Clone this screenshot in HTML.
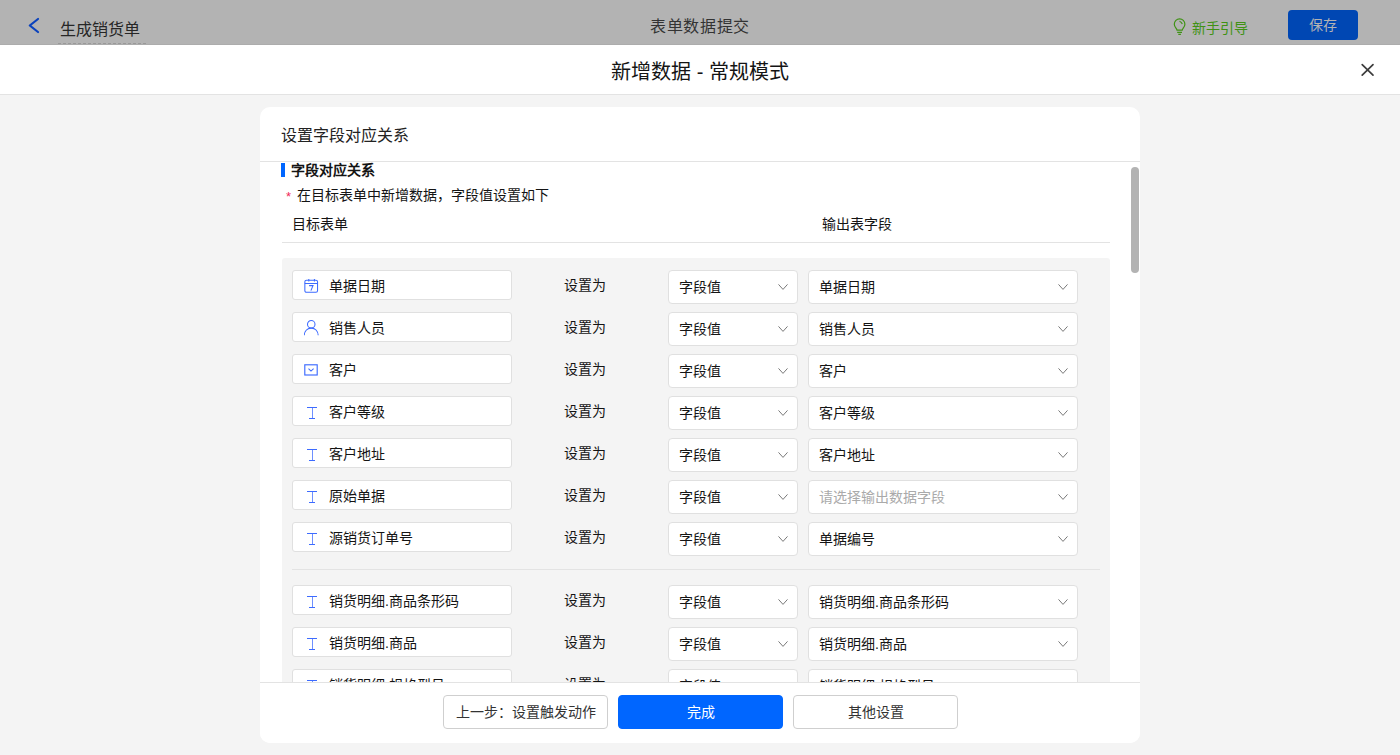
<!DOCTYPE html>
<html lang="zh-CN"><head><meta charset="utf-8">
<style>
*{box-sizing:border-box;margin:0;padding:0}
html,body{width:1400px;height:755px;overflow:hidden;background:#f4f4f4;font-family:"Liberation Sans",sans-serif;color:#333;font-size:14px}
.topbar{position:absolute;left:0;top:0;width:1400px;height:45px;background:#b3b3b3;border-bottom:1px solid #acacac}
.back{position:absolute;left:0;top:0;width:60px;height:45px}
.apptitle{position:absolute;left:60px;top:19px;font-size:16px;line-height:22px;color:#262626}
.apptitle:after{content:"";position:absolute;left:-2px;right:-6px;bottom:-3px;border-bottom:1px dashed #999}
.centertitle{position:absolute;left:0;width:1400px;top:16px;letter-spacing:0.6px;text-align:center;font-size:16px;line-height:22px;color:#333}
.guide{position:absolute;left:1174px;top:17px;color:#3f9214;font-size:14px;line-height:20px}
.guide span{position:absolute;left:18px;top:1px;white-space:nowrap}
.save{position:absolute;left:1288px;top:10px;width:70px;height:30px;background:#0047b3;border-radius:4px;color:#b3b3b3;text-align:center;line-height:30px;font-size:14px}
.mhead{position:absolute;left:0;top:45px;width:1400px;height:50px;background:#fff;border-bottom:1px solid #e3e3e3}
.mtitle{position:absolute;left:0;width:1400px;top:14px;text-align:center;font-size:20px;line-height:26px;color:#141414}
.close{position:absolute;left:1355px;top:58px;width:25px;height:25px}
.card{position:absolute;left:260px;top:107px;width:880px;height:636px;background:#fff;border-radius:10px;overflow:hidden}
.chead{position:absolute;left:0;top:0;width:880px;height:55px;border-bottom:1px solid #e3e3e3}
.chead .t{position:absolute;left:21px;top:18px;font-size:16px;line-height:22px;color:#222}
.scroll{position:absolute;left:0;top:55px;width:880px;height:520px;overflow:hidden}
.sbar{position:absolute;left:871px;top:60px;width:8px;height:106px;background:#b3b3b3;border-radius:4px}
.footer{position:absolute;left:0;top:575px;width:880px;height:61px;border-top:1px solid #e3e3e3;background:#fff}
.btn{position:absolute;top:12px;width:165px;height:34px;border:1px solid #cfcfcf;border-radius:4px;text-align:center;line-height:32px;font-size:14px;color:#333;background:#fff}
.btn.primary{background:#0066ff;border-color:#0066ff;color:#fff}

.clip{position:absolute;left:260px;top:162px;width:870px;height:520px;overflow:hidden}
.inner{position:absolute;left:-260px;top:-162px;width:1400px;height:800px}
.secbar{position:absolute;left:281px;top:163px;width:4px;height:14px;background:#0066ff}
.sectitle{position:absolute;left:291px;top:160px;font-size:14px;line-height:20px;font-weight:bold;color:#141414}
.req{position:absolute;left:286px;top:189px;font-size:13px;line-height:16px;color:#f0285a}
.note{position:absolute;left:297px;top:185px;font-size:14px;line-height:20px;color:#141414}
.colh{position:absolute;top:214px;font-size:14px;line-height:20px;color:#141414}
.hline{position:absolute;left:282px;top:242px;width:828px;height:1px;background:#e3e3e3}
.gray{position:absolute;left:282px;top:258px;width:828px;height:600px;background:#f4f4f4;border-radius:3px}
.sep{position:absolute;left:292px;top:569px;width:808px;height:1px;background:#e3e3e3}
.row{position:absolute;left:0;width:1400px;height:34px}
.inp{position:absolute;left:292px;top:0;width:220px;height:30px;background:#fff;border:1px solid #e0e0e0;border-radius:3px}
.inp .ic{position:absolute;left:11px;top:6px}
.inp span{position:absolute;left:36px;top:5px;line-height:20px;font-size:14px;color:#141414;white-space:nowrap}
.setto{position:absolute;left:564px;top:5px;line-height:20px;font-size:14px;color:#141414}
.sel{position:absolute;top:0;height:34px;background:#fff;border:1px solid #e0e0e0;border-radius:4px}
.sel.s1{left:668px;width:130px}
.sel.s2{left:808px;width:270px}
.sel span{position:absolute;left:10px;top:6px;line-height:20px;font-size:14px;color:#141414;white-space:nowrap}
.sel span.ph{color:#aaa}
.sel .chev{position:absolute;right:8px;top:12px}
</style></head><body>
<div class="topbar">
  <svg class="back" viewBox="0 0 60 45"><path d="M38 19 L29.8 25.5 L38 32" fill="none" stroke="#0a42bd" stroke-width="2.2" stroke-linecap="round" stroke-linejoin="round"/></svg>
  <div class="apptitle">生成销货单</div>
  <div class="centertitle">表单数据提交</div>
  <div class="guide"><svg width="16" height="20" viewBox="1172 17 16 20" style="position:absolute;left:-2px;top:0px"><path d="M1177 30.2 C1177 28.6 1174.3 27.2 1174.3 24.2 C1174.3 21 1176.8 18.9 1179.6 18.9 C1182.4 18.9 1184.9 21 1184.9 24.2 C1184.9 27.2 1182.2 28.6 1182.2 30.2 Z" fill="none" stroke="#3f9214" stroke-width="1.2" stroke-linejoin="round"/><path d="M1177.2 32.3 H1182 M1178.3 34.3 H1180.9" stroke="#3f9214" stroke-width="1.2"/><path d="M1179.5 21.2 C1180.8 21.6 1181.8 22.6 1182.3 24" fill="none" stroke="#3f9214" stroke-width="1.1"/></svg><span>新手引导</span></div>
  <div class="save">保存</div>
</div>
<div class="mhead"><div class="mtitle">新增数据 - 常规模式</div></div>
<svg class="close" viewBox="1355 58 25 25"><path d="M1362.2 64.6 L1373 75.2 M1373 64.6 L1362.2 75.2" stroke="#3d3d3d" stroke-width="1.7" stroke-linecap="round"/></svg>
<div class="card">
  <div class="chead"><div class="t">设置字段对应关系</div></div>
  
  <div class="sbar"></div>
  <div class="footer">
    <div class="btn" style="left:183px">上一步：设置触发动作</div>
    <div class="btn primary" style="left:358px">完成</div>
    <div class="btn" style="left:533px">其他设置</div>
  </div>
</div>
<div class="clip"><div class="inner">
<div class="secbar"></div><div class="sectitle">字段对应关系</div>
<div class="req">*</div><div class="note">在目标表单中新增数据，字段值设置如下</div>
<div class="colh" style="left:292px">目标表单</div><div class="colh" style="left:822px">输出表字段</div>
<div class="hline"></div>
<div class="gray"></div>
<div class="sep"></div>
<div class="row" style="top:270px">
 <div class="inp"><svg class="ic" width="16" height="18" viewBox="0 0 16 18"><rect x="0.85" y="3.2" width="12.7" height="12.1" rx="1.6" fill="none" stroke="#3d6bff" stroke-width="1.05"/><path d="M0.85 6.5 H13.55 M4.8 1.9 V4.6 M10.4 1.9 V4.6" stroke="#3d6bff" stroke-width="1.05"/><path d="M5.1 8.6 H9 L6.9 13.6" fill="none" stroke="#3d6bff" stroke-width="1.05"/></svg><span>单据日期</span></div>
 <div class="setto">设置为</div>
 <div class="sel s1"><span>字段值</span><svg class="chev" width="12" height="8" viewBox="0 0 12 8"><path d="M1.5 1.4 L6 6.4 L10.5 1.4" fill="none" stroke="#7a7a7a" stroke-width="1"/></svg></div>
 <div class="sel s2"><span>单据日期</span><svg class="chev" width="12" height="8" viewBox="0 0 12 8"><path d="M1.5 1.4 L6 6.4 L10.5 1.4" fill="none" stroke="#7a7a7a" stroke-width="1"/></svg></div>
</div>
<div class="row" style="top:312px">
 <div class="inp"><svg class="ic" width="16" height="18" viewBox="0 0 16 18"><circle cx="7.25" cy="5.3" r="3.75" fill="none" stroke="#3d6bff" stroke-width="1.05"/><path d="M0.3 16.3 C0.5 12 3.4 9.1 7.25 9.1 C11.1 9.1 14 12 14.2 16.3" fill="none" stroke="#3d6bff" stroke-width="1.05"/></svg><span>销售人员</span></div>
 <div class="setto">设置为</div>
 <div class="sel s1"><span>字段值</span><svg class="chev" width="12" height="8" viewBox="0 0 12 8"><path d="M1.5 1.4 L6 6.4 L10.5 1.4" fill="none" stroke="#7a7a7a" stroke-width="1"/></svg></div>
 <div class="sel s2"><span>销售人员</span><svg class="chev" width="12" height="8" viewBox="0 0 12 8"><path d="M1.5 1.4 L6 6.4 L10.5 1.4" fill="none" stroke="#7a7a7a" stroke-width="1"/></svg></div>
</div>
<div class="row" style="top:354px">
 <div class="inp"><svg class="ic" width="16" height="18" viewBox="0 0 16 18"><rect x="0.8" y="3.8" width="12.4" height="10.2" fill="none" stroke="#3d6bff" stroke-width="1.15"/><path d="M4.5 7.7 L7 10.1 L9.6 7.7" fill="none" stroke="#3d6bff" stroke-width="1.05"/></svg><span>客户</span></div>
 <div class="setto">设置为</div>
 <div class="sel s1"><span>字段值</span><svg class="chev" width="12" height="8" viewBox="0 0 12 8"><path d="M1.5 1.4 L6 6.4 L10.5 1.4" fill="none" stroke="#7a7a7a" stroke-width="1"/></svg></div>
 <div class="sel s2"><span>客户</span><svg class="chev" width="12" height="8" viewBox="0 0 12 8"><path d="M1.5 1.4 L6 6.4 L10.5 1.4" fill="none" stroke="#7a7a7a" stroke-width="1"/></svg></div>
</div>
<div class="row" style="top:396px">
 <div class="inp"><svg class="ic" width="16" height="18" viewBox="0 0 16 18"><path d="M3 4.5 H13 M5 15.5 H11" fill="none" stroke="#3d6bff" stroke-width="1"/><path d="M8.5 5 V15" stroke="#3d6bff" stroke-opacity="0.75" stroke-width="1"/></svg><span>客户等级</span></div>
 <div class="setto">设置为</div>
 <div class="sel s1"><span>字段值</span><svg class="chev" width="12" height="8" viewBox="0 0 12 8"><path d="M1.5 1.4 L6 6.4 L10.5 1.4" fill="none" stroke="#7a7a7a" stroke-width="1"/></svg></div>
 <div class="sel s2"><span>客户等级</span><svg class="chev" width="12" height="8" viewBox="0 0 12 8"><path d="M1.5 1.4 L6 6.4 L10.5 1.4" fill="none" stroke="#7a7a7a" stroke-width="1"/></svg></div>
</div>
<div class="row" style="top:438px">
 <div class="inp"><svg class="ic" width="16" height="18" viewBox="0 0 16 18"><path d="M3 4.5 H13 M5 15.5 H11" fill="none" stroke="#3d6bff" stroke-width="1"/><path d="M8.5 5 V15" stroke="#3d6bff" stroke-opacity="0.75" stroke-width="1"/></svg><span>客户地址</span></div>
 <div class="setto">设置为</div>
 <div class="sel s1"><span>字段值</span><svg class="chev" width="12" height="8" viewBox="0 0 12 8"><path d="M1.5 1.4 L6 6.4 L10.5 1.4" fill="none" stroke="#7a7a7a" stroke-width="1"/></svg></div>
 <div class="sel s2"><span>客户地址</span><svg class="chev" width="12" height="8" viewBox="0 0 12 8"><path d="M1.5 1.4 L6 6.4 L10.5 1.4" fill="none" stroke="#7a7a7a" stroke-width="1"/></svg></div>
</div>
<div class="row" style="top:480px">
 <div class="inp"><svg class="ic" width="16" height="18" viewBox="0 0 16 18"><path d="M3 4.5 H13 M5 15.5 H11" fill="none" stroke="#3d6bff" stroke-width="1"/><path d="M8.5 5 V15" stroke="#3d6bff" stroke-opacity="0.75" stroke-width="1"/></svg><span>原始单据</span></div>
 <div class="setto">设置为</div>
 <div class="sel s1"><span>字段值</span><svg class="chev" width="12" height="8" viewBox="0 0 12 8"><path d="M1.5 1.4 L6 6.4 L10.5 1.4" fill="none" stroke="#7a7a7a" stroke-width="1"/></svg></div>
 <div class="sel s2"><span class="ph">请选择输出数据字段</span><svg class="chev" width="12" height="8" viewBox="0 0 12 8"><path d="M1.5 1.4 L6 6.4 L10.5 1.4" fill="none" stroke="#7a7a7a" stroke-width="1"/></svg></div>
</div>
<div class="row" style="top:522px">
 <div class="inp"><svg class="ic" width="16" height="18" viewBox="0 0 16 18"><path d="M3 4.5 H13 M5 15.5 H11" fill="none" stroke="#3d6bff" stroke-width="1"/><path d="M8.5 5 V15" stroke="#3d6bff" stroke-opacity="0.75" stroke-width="1"/></svg><span>源销货订单号</span></div>
 <div class="setto">设置为</div>
 <div class="sel s1"><span>字段值</span><svg class="chev" width="12" height="8" viewBox="0 0 12 8"><path d="M1.5 1.4 L6 6.4 L10.5 1.4" fill="none" stroke="#7a7a7a" stroke-width="1"/></svg></div>
 <div class="sel s2"><span>单据编号</span><svg class="chev" width="12" height="8" viewBox="0 0 12 8"><path d="M1.5 1.4 L6 6.4 L10.5 1.4" fill="none" stroke="#7a7a7a" stroke-width="1"/></svg></div>
</div>
<div class="row" style="top:585px">
 <div class="inp"><svg class="ic" width="16" height="18" viewBox="0 0 16 18"><path d="M3 4.5 H13 M5 15.5 H11" fill="none" stroke="#3d6bff" stroke-width="1"/><path d="M8.5 5 V15" stroke="#3d6bff" stroke-opacity="0.75" stroke-width="1"/></svg><span>销货明细.商品条形码</span></div>
 <div class="setto">设置为</div>
 <div class="sel s1"><span>字段值</span><svg class="chev" width="12" height="8" viewBox="0 0 12 8"><path d="M1.5 1.4 L6 6.4 L10.5 1.4" fill="none" stroke="#7a7a7a" stroke-width="1"/></svg></div>
 <div class="sel s2"><span>销货明细.商品条形码</span><svg class="chev" width="12" height="8" viewBox="0 0 12 8"><path d="M1.5 1.4 L6 6.4 L10.5 1.4" fill="none" stroke="#7a7a7a" stroke-width="1"/></svg></div>
</div>
<div class="row" style="top:627px">
 <div class="inp"><svg class="ic" width="16" height="18" viewBox="0 0 16 18"><path d="M3 4.5 H13 M5 15.5 H11" fill="none" stroke="#3d6bff" stroke-width="1"/><path d="M8.5 5 V15" stroke="#3d6bff" stroke-opacity="0.75" stroke-width="1"/></svg><span>销货明细.商品</span></div>
 <div class="setto">设置为</div>
 <div class="sel s1"><span>字段值</span><svg class="chev" width="12" height="8" viewBox="0 0 12 8"><path d="M1.5 1.4 L6 6.4 L10.5 1.4" fill="none" stroke="#7a7a7a" stroke-width="1"/></svg></div>
 <div class="sel s2"><span>销货明细.商品</span><svg class="chev" width="12" height="8" viewBox="0 0 12 8"><path d="M1.5 1.4 L6 6.4 L10.5 1.4" fill="none" stroke="#7a7a7a" stroke-width="1"/></svg></div>
</div>
<div class="row" style="top:669px">
 <div class="inp"><svg class="ic" width="16" height="18" viewBox="0 0 16 18"><path d="M3 4.5 H13 M5 15.5 H11" fill="none" stroke="#3d6bff" stroke-width="1"/><path d="M8.5 5 V15" stroke="#3d6bff" stroke-opacity="0.75" stroke-width="1"/></svg><span>销货明细.规格型号</span></div>
 <div class="setto">设置为</div>
 <div class="sel s1"><span>字段值</span><svg class="chev" width="12" height="8" viewBox="0 0 12 8"><path d="M1.5 1.4 L6 6.4 L10.5 1.4" fill="none" stroke="#7a7a7a" stroke-width="1"/></svg></div>
 <div class="sel s2"><span>销货明细.规格型号</span><svg class="chev" width="12" height="8" viewBox="0 0 12 8"><path d="M1.5 1.4 L6 6.4 L10.5 1.4" fill="none" stroke="#7a7a7a" stroke-width="1"/></svg></div>
</div>
</div></div>
</body></html>
